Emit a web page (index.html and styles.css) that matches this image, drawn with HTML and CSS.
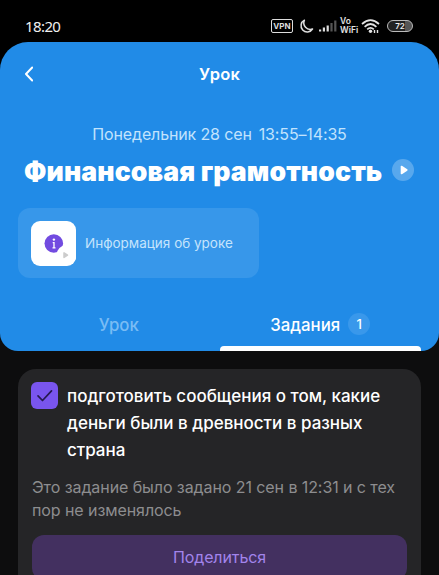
FILE: index.html
```html
<!DOCTYPE html>
<html lang="ru">
<head>
<meta charset="utf-8">
<title>Урок</title>
<link rel="stylesheet" href="styles.css">
</head>
<body>
<div class="status">
  <span class="time">18:20</span>
  <div class="status-icons">
    <span class="vpn">VPN</span>
    <svg class="moon" width="15" height="15" viewBox="0 0 15 15"><path d="M5.4 1.200A6.200 6.200 0 1 0 13.500 10A6.500 6.500 0 0 1 5.400 1.200Z" fill="none" stroke="#ddd" stroke-width="1.500" stroke-linejoin="round"/></svg>
    <svg class="signal" width="19" height="12" viewBox="0 0 19 12"><g fill="#ddd"><rect x="0" y="9.500" width="2.200" height="2"/><rect x="3.800" y="7.500" width="2.200" height="4"/><rect x="7.600" y="5.500" width="2.200" height="6"/></g><g fill="#555"><rect x="11.400" y="3" width="2.200" height="8.500"/><rect x="15.200" y="0.500" width="2.200" height="11"/></g></svg>
    <div class="vowifi"><span>Vo</span><span>WiFi</span></div>
    <svg class="wifi" width="20" height="15" viewBox="0 0 20 15"><g fill="none" stroke="#e4e4e4" stroke-width="1.700"><path d="M1 5Q9.500-2.800 18 5"/><path d="M3.600 7.800Q9.500 2.200 15.400 7.800"/><path d="M6.200 10.400Q9.500 7.200 12.800 10.400"/></g><circle cx="9.500" cy="12.300" r="1.700" fill="#e4e4e4"/><path d="M13.500 14v-3M16.500 14v-3" stroke="#e4e4e4" stroke-width="1.400"/></svg>
    <span class="battery">72</span>
  </div>
</div>
<header class="hero">
  <div class="nav">
    <svg class="back" width="10" height="16" viewBox="0 0 10 16"><path d="M9.200 1.500L3 8L9.200 14.500" fill="none" stroke="#fff" stroke-width="2" stroke-linecap="round" stroke-linejoin="round"/></svg>
    <span class="nav-title">Урок</span>
  </div>
  <div class="date"><span>Понедельник 28 сен</span><span>13:55–14:35</span></div>
  <div class="title-row">
    <h1>Финансовая грамотность</h1>
    <svg class="play" width="22" height="22" viewBox="0 0 22 22"><circle cx="11" cy="11" r="11" fill="#fff" fill-opacity=".25"/><path d="M9.500 7.500v7l5.300-3.500z" fill="#fff" stroke="#fff" stroke-width="1.600" stroke-linejoin="round"/></svg>
  </div>
  <div class="info">
    <div class="info-icon"><svg width="45" height="45" viewBox="0 0 45 45"><circle cx="22.800" cy="22.500" r="9.300" fill="#724be0"/><circle cx="35.500" cy="34" r="10" fill="#fff"/><circle cx="22.900" cy="18.600" r="1.200" fill="#fff"/><path d="M21.700 21.600h1.300v5M21.500 26.800h3" fill="none" stroke="#fff" stroke-width="1.300"/><path d="M33 31.800v4.600l3.500-2.300z" fill="#ccc" stroke="#ccc" stroke-width="1.500" stroke-linejoin="round"/></svg></div>
    <span>Информация об уроке</span>
  </div>
  <div class="tabs">
    <div class="tab">Урок</div>
    <div class="tab active"><span>Задания</span><span class="badge">1</span></div>
  </div>
</header>
<main class="card">
  <div class="task">
    <svg class="check" width="27" height="27" viewBox="0 0 27 27"><rect width="27" height="27" rx="6" fill="#7955ee"/><path d="M7 13.800L11.500 18.500L20.500 8.800" fill="none" stroke="#261a50" stroke-width="1.700" stroke-linecap="round" stroke-linejoin="round"/></svg>
    <p>подготовить сообщения о том, какие<br>деньги были в древности в разных<br>страна</p>
  </div>
  <p class="note">Это задание было задано 21 сен в 12:31 и с тех<br>пор не изменялось</p>
  <div class="share">Поделиться</div>
</main>
</body>
</html>
```
FILE: styles.css
```css
* { box-sizing: border-box; }
body {
  margin: 0;
  height: 575px;
  overflow: hidden;
  background: #0d0d0e;
  font-family: Inter, "Liberation Sans", sans-serif;
  color: #fff;
  white-space: nowrap;
}
p, h1 { margin: 0; }
svg { display: block; flex: none; }
.status {
  height: 72px;
  margin-bottom: -30px;
  padding: 16px 26px 0 25px;
  background: #000;
  display: flex;
  justify-content: space-between;
  align-items: flex-start;
}
.time { font: 400 15px/20px "Noto Sans", sans-serif; letter-spacing: -0.6px; color: #f0f0f0; }
.status-icons { display: flex; align-items: center; height: 20px; }
.vpn {
  width: 22px;
  height: 14px;
  border: 1.5px solid #ddd;
  border-radius: 2px;
  font: 700 8px/12px Inter, sans-serif;
  text-align: center;
  color: #ddd;
}
.moon { margin-left: 6px; }
.signal { margin-left: 5px; }
.vowifi {
  width: 18px;
  margin-left: 2px;
  display: flex;
  flex-direction: column;
  font: 600 8.5px/9px Inter, sans-serif;
  color: #e4e4e4;
}
.wifi { margin-left: 3px; }
.battery {
  width: 26px;
  height: 12px;
  margin-left: 6px;
  border: 1.5px solid #bbb;
  border-radius: 6px;
  background: linear-gradient(90deg, #222 72%, #555 72%);
  font: 600 8px/10px Inter, sans-serif;
  text-align: center;
  color: #eee;
}
.hero {
  position: relative;
  height: 309px;
  border-radius: 28px 28px 18px 18px;
  background: #218be7;
  display: flex;
  flex-direction: column;
}
.nav {
  height: 64px;
  padding: 0 23px;
  display: grid;
  grid-template-columns: 10px 1fr 10px;
  align-items: center;
}
.nav-title { text-align: center; font-size: 16.5px; font-weight: 600; letter-spacing: 0.2px; }
.date {
  height: 20px;
  margin-top: 18px;
  display: flex;
  justify-content: center;
  gap: 7px;
  font-size: 16px;
  line-height: 20px;
  letter-spacing: -0.14px;
  color: #c2e3fd;
}
.title-row {
  height: 34px;
  margin-top: 9px;
  padding-left: 24px;
  display: flex;
  align-items: center;
}
h1 { width: 359px; padding-top: 1px; font-size: 26.6px; line-height: 34px; font-weight: 900; letter-spacing: 0.12px; }
.play { margin-left: 9px; }
.info {
  width: 241px;
  height: 70px;
  margin: 21px 0 0 18px;
  padding-left: 13px;
  border-radius: 12px;
  background: #3797ea;
  display: flex;
  align-items: center;
  gap: 9px;
  font-size: 13.5px;
  color: #c5e4fc;
}
.info-icon { width: 45px; height: 45px; border-radius: 9px; background: #fff; }
.tabs {
  flex: 1;
  margin: 20px 18px 0;
  display: grid;
  grid-template-columns: 1fr 1fr;
  font-size: 16.8px;
  line-height: 20px;
  font-weight: 500;
}
.tab {
  padding-top: 17px;
  display: flex;
  justify-content: center;
  align-items: flex-start;
  color: #79bcf4;
}
.active { gap: 8px; color: #fff; }
.active::after {
  content: "";
  position: absolute;
  right: 18px;
  bottom: 0;
  width: 201px;
  height: 5px;
  border-radius: 4px 4px 0 0;
  background: #fff;
}
.badge {
  width: 22px;
  height: 22px;
  margin-top: -2px;
  border-radius: 50%;
  background: #3998eb;
  font-size: 13px;
  line-height: 22px;
  text-align: center;
}
.card {
  height: 240px;
  margin: 18px 18px 0;
  padding: 13px 14px 0;
  border-radius: 18px;
  background: #252527;
}
.task { display: flex; gap: 9px; margin-left: -1px; }
.task p { padding-top: 1px; font-size: 17px; line-height: 27px; font-weight: 500; }
.note { margin-top: 12px; font-size: 16px; line-height: 22.5px; letter-spacing: -0.08px; color: #8d8d8f; }
.share {
  height: 45px;
  margin-top: 14px;
  border-radius: 12px;
  background: #433060;
  font-size: 16px;
  line-height: 45px;
  letter-spacing: -0.1px;
  text-align: center;
  color: #a284ec;
}
```
